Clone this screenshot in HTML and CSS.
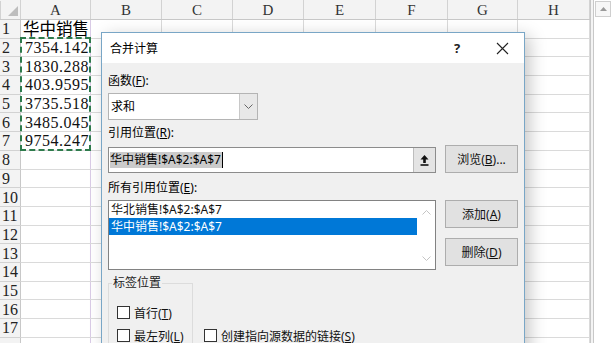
FILE: index.html
```html
<!DOCTYPE html>
<html lang="zh-CN">
<head>
<meta charset="utf-8">
<title>合并计算</title>
<link rel="stylesheet" href="styles.css">
</head>
<body>
<div class="app">
  <table class="sheet">
    <colgroup>
      <col class="w-rh"><col class="w-70"><col class="w-71"><col class="w-71"><col class="w-71"><col class="w-72"><col class="w-72"><col class="w-70"><col class="w-72">
    </colgroup>
    <thead>
      <tr>
        <th class="corner"><svg class="corner-tri" width="12" height="12" viewBox="0 0 12 12"><path d="M11 1V11H1Z" fill="#bdbdbd"/></svg></th>
        <th>A</th><th>B</th><th>C</th><th>D</th><th>E</th><th>F</th><th>G</th><th>H</th>
      </tr>
    </thead>
    <tbody>
      <tr><th>1</th><td class="ca cn">华中销售</td><td></td><td></td><td></td><td></td><td></td><td></td><td></td></tr>
      <tr><th>2</th><td class="ca num">7354.142</td><td></td><td></td><td></td><td></td><td></td><td></td><td></td></tr>
      <tr><th>3</th><td class="ca num">1830.288</td><td></td><td></td><td></td><td></td><td></td><td></td><td></td></tr>
      <tr><th>4</th><td class="ca num">403.9595</td><td></td><td></td><td></td><td></td><td></td><td></td><td></td></tr>
      <tr><th>5</th><td class="ca num">3735.518</td><td></td><td></td><td></td><td></td><td></td><td></td><td></td></tr>
      <tr><th>6</th><td class="ca num">3485.045</td><td></td><td></td><td></td><td></td><td></td><td></td><td></td></tr>
      <tr><th>7</th><td class="ca num">9754.247</td><td></td><td></td><td></td><td></td><td></td><td></td><td></td></tr>
      <tr><th>8</th><td class="ca"></td><td></td><td></td><td></td><td></td><td></td><td></td><td></td></tr>
      <tr><th>9</th><td class="ca"></td><td></td><td></td><td></td><td></td><td></td><td></td><td></td></tr>
      <tr><th>10</th><td class="ca"></td><td></td><td></td><td></td><td></td><td></td><td></td><td></td></tr>
      <tr><th>11</th><td class="ca"></td><td></td><td></td><td></td><td></td><td></td><td></td><td></td></tr>
      <tr><th>12</th><td class="ca"></td><td></td><td></td><td></td><td></td><td></td><td></td><td></td></tr>
      <tr><th>13</th><td class="ca"></td><td></td><td></td><td></td><td></td><td></td><td></td><td></td></tr>
      <tr><th>14</th><td class="ca"></td><td></td><td></td><td></td><td></td><td></td><td></td><td></td></tr>
      <tr><th>15</th><td class="ca"></td><td></td><td></td><td></td><td></td><td></td><td></td><td></td></tr>
      <tr><th>16</th><td class="ca"></td><td></td><td></td><td></td><td></td><td></td><td></td><td></td></tr>
      <tr><th>17</th><td class="ca"></td><td></td><td></td><td></td><td></td><td></td><td></td><td></td></tr>
      <tr><th></th><td class="ca"></td><td></td><td></td><td></td><td></td><td></td><td></td><td></td></tr>
    </tbody>
  </table>
  <div class="vgap"></div>
  <div class="vscroll">
    <div class="vs-up"><svg width="7" height="4" viewBox="0 0 7 4"><path d="M0 4L3.5 0L7 4Z" fill="#9a9a9a"/></svg></div>
  </div>
</div>

<div class="marquee"></div>

<div class="dialog">
  <div class="titlebar">
    <span class="title">合并计算</span>
    <span class="tb-help">?</span>
    <span class="tb-close"><svg width="13" height="13" viewBox="0 0 13 13"><path d="M1 1L12 12M12 1L1 12" stroke="#222" stroke-width="1.1" fill="none"/></svg></span>
  </div>
  <div class="dlg-body">
    <div class="lbl">函数(<u>F</u>):</div>
    <div class="combo">
      <span class="combo-text">求和</span>
      <span class="combo-btn"><svg width="9" height="5" viewBox="0 0 9 5"><path d="M0.5 0.5L4.5 4.5L8.5 0.5" stroke="#666" stroke-width="1" fill="none"/></svg></span>
    </div>
    <div class="lbl lbl-ref">引用位置(<u>R</u>):</div>
    <div class="ref-row">
      <div class="refedit">
        <span class="ref-text"><span class="sel">华中销售!$A$2:$A$7</span><span class="caret"></span></span>
        <span class="ref-btn"><svg width="9" height="11" viewBox="0 0 9 11"><path d="M4.5 0L0.5 4.5H3.2V8H5.8V4.5H8.5Z" fill="#111"/><rect x="0.5" y="9.2" width="8" height="1.6" fill="#111"/></svg></span>
      </div>
      <div class="btn btn-browse"><span>浏览(<u>B</u>)...</span></div>
    </div>
    <div class="lbl lbl-all">所有引用位置(<u>E</u>):</div>
    <div class="list-row">
      <div class="listbox">
        <div class="items">
          <div class="item">华北销售!$A$2:$A$7</div>
          <div class="item selected">华中销售!$A$2:$A$7</div>
        </div>
        <div class="lb-scroll">
          <svg width="9" height="5" viewBox="0 0 9 5"><path d="M0.5 4.5L4.5 0.5L8.5 4.5" stroke="#c4c4c4" stroke-width="1" fill="none"/></svg>
          <svg width="9" height="5" viewBox="0 0 9 5"><path d="M0.5 0.5L4.5 4.5L8.5 0.5" stroke="#c4c4c4" stroke-width="1" fill="none"/></svg>
        </div>
      </div>
      <div class="side-btns">
        <div class="btn"><span>添加(<u>A</u>)</span></div>
        <div class="btn"><span>删除(<u>D</u>)</span></div>
      </div>
    </div>
    <div class="opts">
      <fieldset class="group">
        <legend>标签位置</legend>
        <label class="chk"><span class="box"></span><span>首行(<u>T</u>)</span></label>
        <label class="chk"><span class="box"></span><span>最左列(<u>L</u>)</span></label>
      </fieldset>
      <label class="chk chk-link"><span class="box"></span><span>创建指向源数据的链接(<u>S</u>)</span></label>
    </div>
  </div>
</div>
</body>
</html>
```

FILE: styles.css
```css
* { box-sizing: border-box; }
html, body { margin: 0; padding: 0; background: #fff; }
body {
  width: 612px;
  height: 343px;
  overflow: hidden;
  position: relative;
  font-family: "Liberation Serif", "Noto Sans CJK SC", serif;
}

/* ---------- spreadsheet ---------- */
.app { display: flex; height: 343px; }
.sheet {
  table-layout: fixed;
  border-collapse: collapse;
  width: 589px;
  flex: none;
}
.w-rh { width: 20px; }
.w-70 { width: 70px; }
.w-71 { width: 71px; }
.w-72 { width: 72px; }

.sheet th, .sheet td {
  border: 1px solid #dadada;
  padding: 0;
  overflow: hidden;
  white-space: nowrap;
}
.sheet thead th {
  height: 19px;
  background: #f3f3f3;
  font-weight: normal;
  font-size: 15px;
  line-height: 17px;
  color: #333;
  text-align: center;
  border-color: #f3f3f3 #d2d2d2 #c8c8c8 #d2d2d2;
}
.sheet thead th.corner { text-align: right; vertical-align: bottom; }
.corner-tri { display: block; margin: 0 1px 2px auto; }
.sheet tbody tr { height: 18.7px; }
.sheet tbody th {
  background: #f3f3f3;
  font-weight: normal;
  font-size: 16px;
  line-height: 17px;
  text-align: left;
  padding-left: 1px;
  color: #222;
  border-color: #d2d2d2 #c8c8c8 #d2d2d2 #f3f3f3;
}
.sheet td { font-size: 16px; line-height: 17px; color: #000; }
.sheet td.ca { border-right-color: #d9cbe6; }
.sheet td.cn {
  font-family: "Noto Sans CJK SC", sans-serif;
  font-size: 16.5px;
  padding-left: 2px;
  overflow: visible;
}
.sheet td.num {
  font-family: "Liberation Serif", serif;
  letter-spacing: 0.5px;
  padding-left: 4px;
  color: #111;
}

.vgap {
  width: 4px;
  flex: none;
  border-left: 1px solid #c8c8c8;
  border-right: 1px solid #c8c8c8;
  background: #f4f4f4;
}
.vscroll {
  width: 19px;
  flex: none;
  background: #fff;
  display: flex;
  flex-direction: column;
}
.vs-up {
  height: 16px;
  margin: 1px 2px 0 1px;
  border: 1px solid #cfcfcf;
  background: #f7f7f7;
  display: flex;
  align-items: center;
  justify-content: center;
}

.marquee {
  position: absolute;
  left: 20px;
  top: 37px;
  width: 71px;
  height: 114px;
  border: 2px dashed #2e7b4c;
}

/* ---------- dialog ---------- */
.dialog {
  position: absolute;
  left: 101px;
  top: 32px;
  width: 424px;
  height: 330px;
  border: 1px solid #79a6c6;
  background: #f0f0f0;
  box-shadow: 5px 4px 16px rgba(0, 0, 0, 0.22);
  font-family: "Noto Sans", "Noto Sans CJK SC", sans-serif;
  font-size: 12px;
  color: #000;
}
.titlebar {
  height: 30px;
  background: #fff;
  display: flex;
  align-items: center;
  padding-left: 8px;
}
.title { flex: 1; }
.tb-help {
  width: 30px;
  margin-right: 8px;
  text-align: center;
  font-size: 13px;
  font-weight: bold;
  color: #222;
}
.tb-close {
  width: 44px;
  height: 30px;
  display: flex;
  align-items: center;
  justify-content: center;
}

.dlg-body { padding: 10px 6px 0 6px; }
.lbl { height: 16px; line-height: 16px; }
.combo {
  margin-top: 4px;
  width: 150px;
  height: 27px;
  border: 1px solid #b4b4b4;
  background: #fff;
  display: flex;
}
.combo-text { flex: 1; padding-left: 2px; line-height: 25px; }
.combo-btn {
  width: 18px;
  background: #e8e8e8;
  border-left: 1px solid #c8c8c8;
  display: flex;
  align-items: center;
  justify-content: center;
}
.lbl-ref { margin-top: 5px; }
.ref-row {
  margin-top: 4px;
  height: 28px;
  display: flex;
  align-items: flex-end;
}
.refedit {
  width: 328px;
  height: 26px;
  border: 1px solid #8c8c8c;
  background: #fff;
  display: flex;
}
.ref-text {
  flex: 1;
  padding-left: 1px;
  display: flex;
  align-items: center;
}
.sel {
  background: #cbcbcb;
  line-height: 16px;
  padding-right: 1px;
}
.caret { width: 1px; height: 16px; background: #000; }
.ref-btn {
  width: 22px;
  background: #e4e4e4;
  border-left: 1px solid #bdbdbd;
  display: flex;
  align-items: center;
  justify-content: center;
}
.btn {
  width: 73px;
  height: 28px;
  background: #e1e1e1;
  border: 1px solid #adadad;
  display: flex;
  align-items: center;
  justify-content: center;
  color: #111;
}
.btn-browse { margin-left: 9px; }
.lbl-all { margin-top: 7px; }
.list-row {
  margin-top: 4px;
  height: 70px;
  display: flex;
  align-items: flex-start;
}
.listbox {
  width: 328px;
  height: 70px;
  border: 1px solid #828282;
  background: #fff;
  display: flex;
}
.items { width: 308px; }
.item { height: 17px; line-height: 17px; padding-left: 2px; color: #111; }
.item.selected { background: #0078d7; color: #fff; }
.lb-scroll {
  flex: 1;
  display: flex;
  flex-direction: column;
  align-items: center;
  justify-content: space-between;
  padding: 9px 0 8px;
}
.side-btns {
  margin-left: 9px;
  display: flex;
  flex-direction: column;
  gap: 10px;
}

.opts {
  margin-top: 5px;
  display: flex;
  align-items: flex-start;
}
.group {
  margin: 0;
  width: 85px;
  height: 90px;
  padding: 10px 0 0 8px;
  border: 1px solid #dcdcdc;
}
.group legend {
  margin-left: -5px;
  padding: 0 1px;
  line-height: 16px;
  color: #222;
}
.chk {
  height: 23px;
  display: flex;
  align-items: center;
  gap: 4px;
  white-space: nowrap;
  color: #111;
}
.box {
  width: 13px;
  height: 13px;
  border: 1px solid #333;
  background: #fff;
  flex: none;
}
.chk-link { margin-left: 11px; margin-top: 49px; }
```
